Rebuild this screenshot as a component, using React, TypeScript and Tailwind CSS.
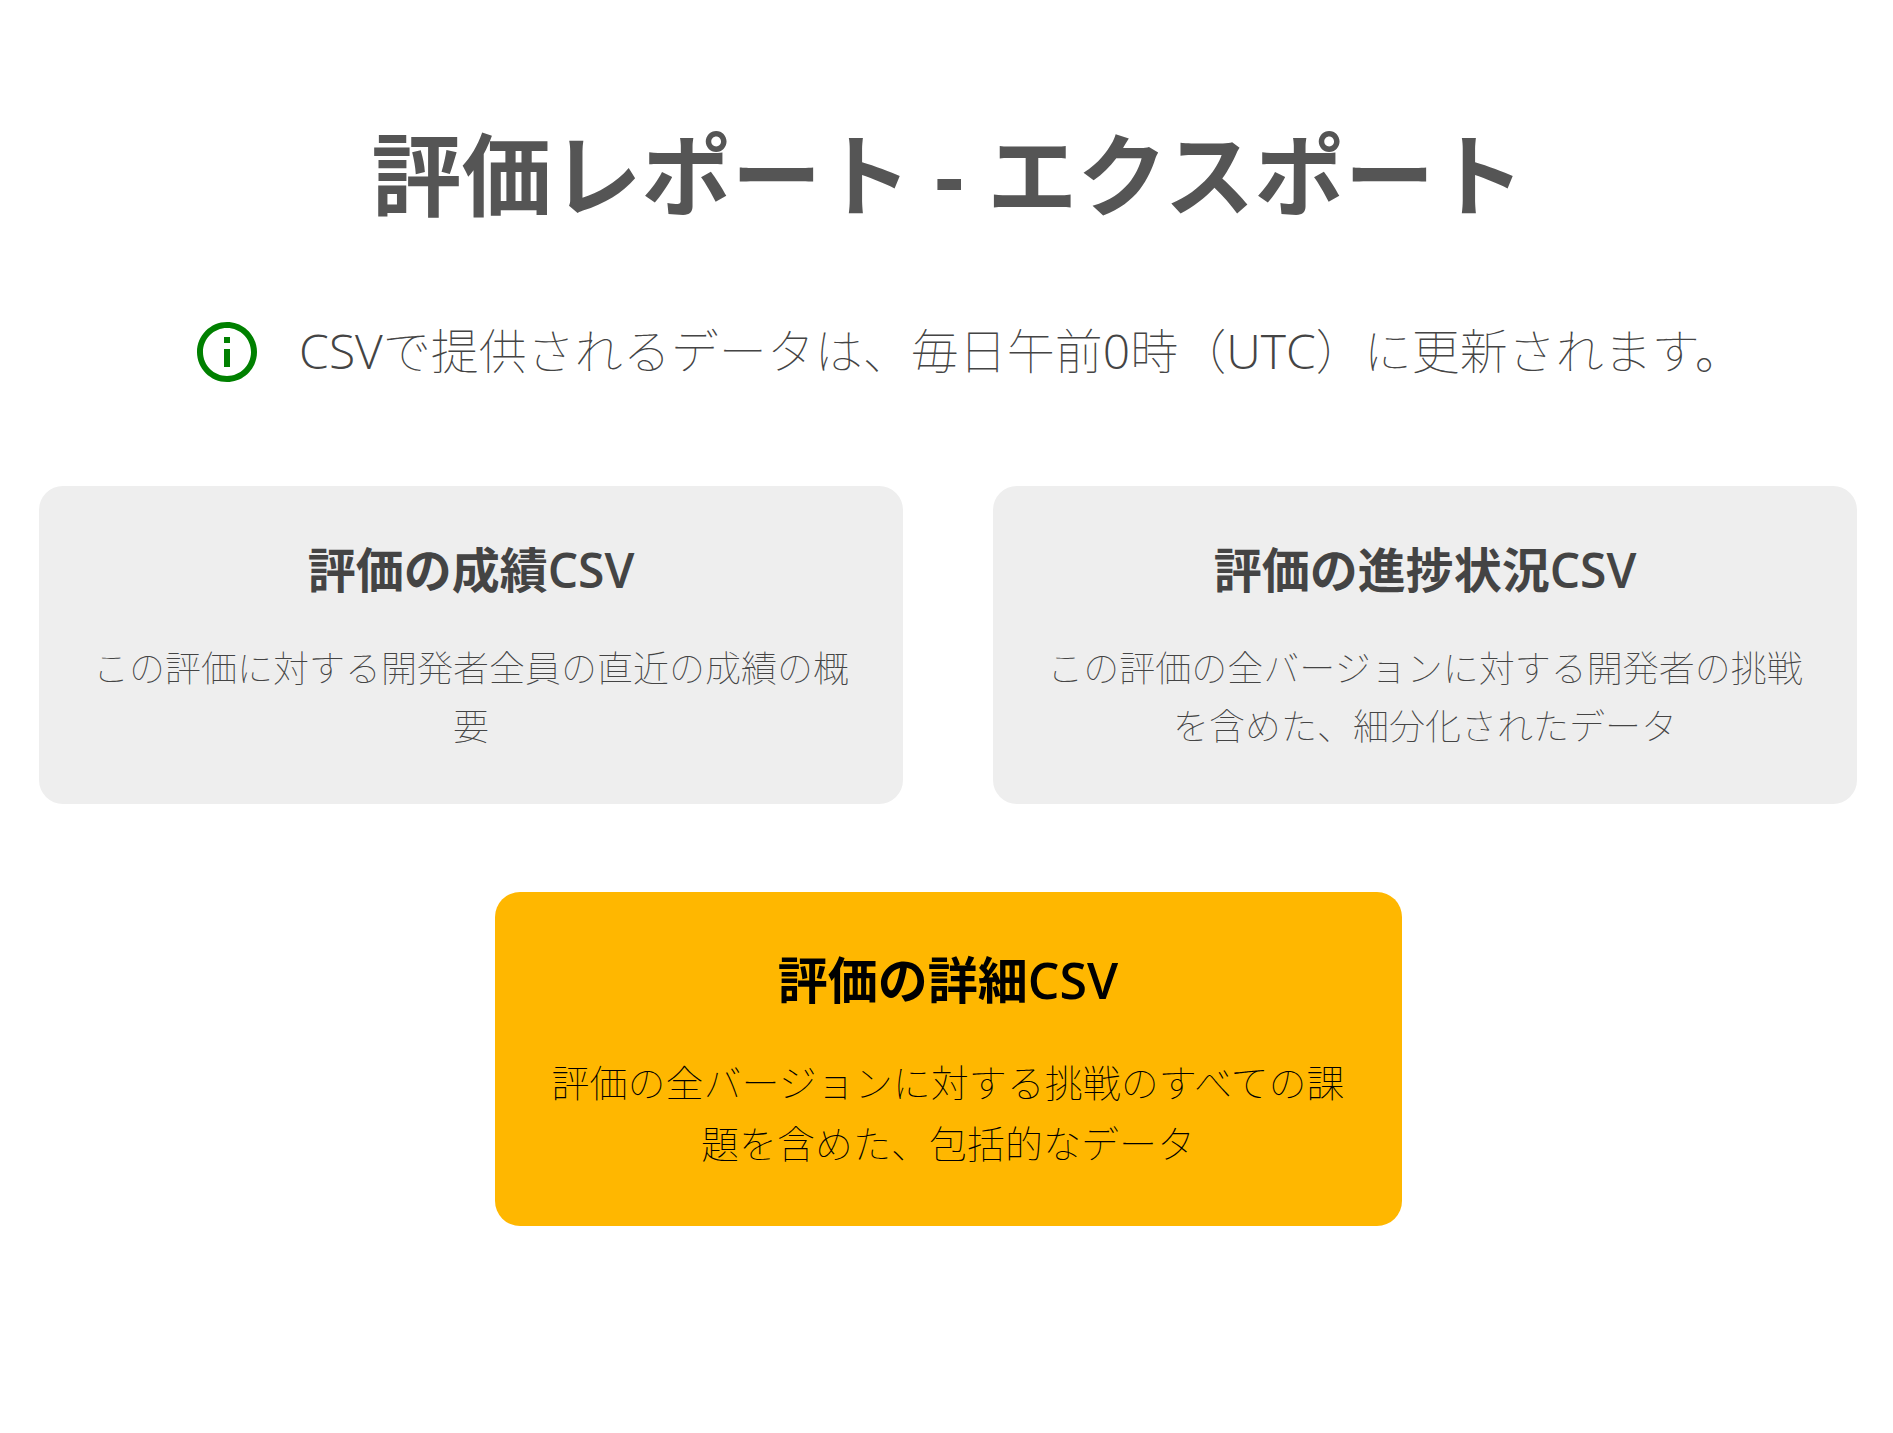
import React from 'react';

interface ExportCardProps {
  title: string;
  description: string;
  highlighted?: boolean;
}

const ExportCard: React.FC<ExportCardProps> = ({ title, description, highlighted = false }) => (
  <button
    type="button"
    className={
      highlighted
        ? 'w-[907px] max-w-full rounded-[25px] bg-[#ffb700] px-[50px] pt-[50px] pb-[52px] text-center text-black'
        : 'w-full rounded-[24px] bg-[#eeeeee] px-12 pt-12 pb-12 text-center text-[#444444]'
    }
  >
    <h2 className={highlighted ? 'text-[50px] leading-[76px] font-semibold' : 'text-[48px] leading-[72px] font-semibold'}>
      {title}
    </h2>
    <p className={highlighted ? 'mt-[34px] text-[38px] leading-[61px] font-thin' : 'mt-[34px] text-[36px] leading-[58px] font-thin'}>
      {description}
    </p>
  </button>
);

export default function App() {
  return (
    <main className="min-h-screen bg-white pl-[39px] pr-9 pt-[110px] pb-20 font-['Open_Sans','Noto_Sans_CJK_JP',sans-serif]">
      <h1 className="text-center text-[90px] leading-[128px] font-bold text-[#555555]">
        評価レポート - エクスポート
      </h1>

      <div className="mt-[78px] flex items-center justify-center gap-9 pl-[38px]">
        <svg viewBox="0 0 24 24" className="size-[72px] shrink-0" fill="#008000" aria-hidden="true">
          <path d="M11 7h2v2h-2zm0 4h2v6h-2zm1-9C6.480 2 2 6.480 2 12s4.480 10 10 10 10-4.480 10-10S17.520 2 12 2zm0 18c-4.410 0-8-3.590-8-8s3.590-8 8-8 8 3.590 8 8-3.590 8-8 8z" />
        </svg>
        <p className="pb-[2px] text-[48px] leading-[70px] font-thin text-[#444444]">
          CSVで提供されるデータは、毎日午前0時（UTC）に更新されます。
        </p>
      </div>

      <div className="mt-[98px] grid grid-cols-2 gap-[90px]">
        <ExportCard title="評価の成績CSV" description="この評価に対する開発者全員の直近の成績の概要" />
        <ExportCard title="評価の進捗状況CSV" description="この評価の全バージョンに対する開発者の挑戦を含めた、細分化されたデータ" />
      </div>

      <div className="mt-[88px] flex justify-center">
        <ExportCard
          highlighted
          title="評価の詳細CSV"
          description="評価の全バージョンに対する挑戦のすべての課題を含めた、包括的なデータ"
        />
      </div>
    </main>
  );
}
